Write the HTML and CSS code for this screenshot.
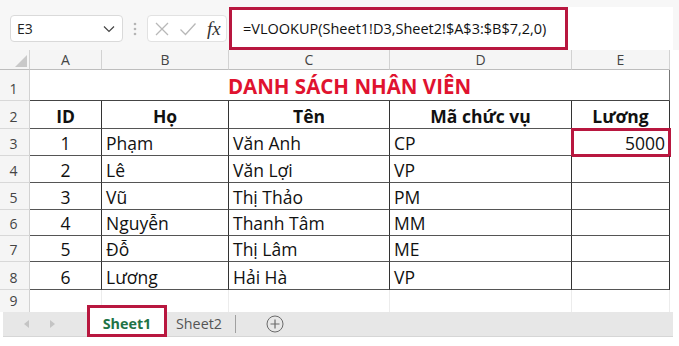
FILE: index.html
```html
<!DOCTYPE html>
<html lang="vi">
<head>
    <meta charset="UTF-8">
    <meta name="viewport" content="width=device-width, initial-scale=1.0">
    <title>Danh sách nhân viên</title>
    <link rel="stylesheet" href="styles.css">
</head>
<body>
    <div class="formula-bar">
        <div class="name-box">
            <span>E3</span>
            <svg class="chevron" width="12" height="8" viewBox="0 0 12 8"><path d="M1 1.5 L6 6.5 L11 1.5" fill="none" stroke="#444" stroke-width="1.2"/></svg>
        </div>
        <svg class="grip" width="4" height="16" viewBox="0 0 4 16"><circle cx="2" cy="3" r="1.3" fill="#b5b5b5"/><circle cx="2" cy="8" r="1.3" fill="#b5b5b5"/><circle cx="2" cy="13" r="1.3" fill="#b5b5b5"/></svg>
        <div class="fx-box">
            <svg width="16" height="16" viewBox="0 0 16 16"><path d="M2 2 L14 14 M14 2 L2 14" stroke="#b8b8b8" stroke-width="1.3"/></svg>
            <svg width="18" height="16" viewBox="0 0 18 16"><path d="M1.5 8.5 L6.5 13.5 L16.5 2.5" fill="none" stroke="#b8b8b8" stroke-width="1.3"/></svg>
            <span class="fx">fx</span>
        </div>
        <div class="formula-input">
            <div class="formula-hl">=VLOOKUP(Sheet1!D3,Sheet2!$A$3:$B$7,2,0)</div>
        </div>
    </div>

    <div class="sheet">
        <div class="cell corner"><svg width="12" height="12" viewBox="0 0 12 12"><path d="M12 0 L12 12 L0 12 Z" fill="#c9c9c9"/></svg></div>
        <div class="cell col-head">A</div>
        <div class="cell col-head">B</div>
        <div class="cell col-head">C</div>
        <div class="cell col-head">D</div>
        <div class="cell col-head">E</div>
        <div class="cell pad"></div>

        <div class="cell row-head">1</div>
        <div class="cell title">DANH SÁCH NHÂN VIÊN</div>
        <div class="cell pad"></div>

        <div class="cell row-head">2</div>
        <div class="cell box th">ID</div>
        <div class="cell box th">Họ</div>
        <div class="cell box th">Tên</div>
        <div class="cell box th">Mã chức vụ</div>
        <div class="cell box th">Lương</div>
        <div class="cell pad"></div>

        <div class="cell row-head">3</div>
        <div class="cell box num">1</div>
        <div class="cell box">Phạm</div>
        <div class="cell box">Văn Anh</div>
        <div class="cell box">CP</div>
        <div class="cell box money selected">5000</div>
        <div class="cell pad"></div>

        <div class="cell row-head">4</div>
        <div class="cell box num">2</div>
        <div class="cell box">Lê</div>
        <div class="cell box">Văn Lợi</div>
        <div class="cell box">VP</div>
        <div class="cell box"></div>
        <div class="cell pad"></div>

        <div class="cell row-head">5</div>
        <div class="cell box num">3</div>
        <div class="cell box">Vũ</div>
        <div class="cell box">Thị Thảo</div>
        <div class="cell box">PM</div>
        <div class="cell box"></div>
        <div class="cell pad"></div>

        <div class="cell row-head">6</div>
        <div class="cell box num">4</div>
        <div class="cell box">Nguyễn</div>
        <div class="cell box">Thanh Tâm</div>
        <div class="cell box">MM</div>
        <div class="cell box"></div>
        <div class="cell pad"></div>

        <div class="cell row-head">7</div>
        <div class="cell box num">5</div>
        <div class="cell box">Đỗ</div>
        <div class="cell box">Thị Lâm</div>
        <div class="cell box">ME</div>
        <div class="cell box"></div>
        <div class="cell pad"></div>

        <div class="cell row-head">8</div>
        <div class="cell box num">6</div>
        <div class="cell box">Lương</div>
        <div class="cell box">Hải Hà</div>
        <div class="cell box">VP</div>
        <div class="cell box"></div>
        <div class="cell pad"></div>

        <div class="cell row-head last">9</div>
        <div class="cell last"></div>
        <div class="cell last"></div>
        <div class="cell last"></div>
        <div class="cell last"></div>
        <div class="cell last"></div>
        <div class="cell pad"></div>
    </div>

    <div class="tab-bar">
        <div class="tab-nav">
            <svg width="6" height="8" viewBox="0 0 6 8"><path d="M5 0 L5 8 L0 4 Z" fill="#c4c4c4"/></svg>
            <svg width="6" height="8" viewBox="0 0 6 8"><path d="M1 0 L1 8 L6 4 Z" fill="#c4c4c4"/></svg>
        </div>
        <div class="tab active">Sheet1</div>
        <div class="tab">Sheet2</div>
        <div class="tab-sep"></div>
        <svg class="add-sheet" width="18" height="18" viewBox="0 0 18 18"><circle cx="9" cy="9" r="8" fill="none" stroke="#6a6a6a" stroke-width="1"/><path d="M9 4.5 V13.5 M4.5 9 H13.5" stroke="#6a6a6a" stroke-width="1.2"/></svg>
    </div>
</body>
</html>
```

FILE: styles.css
```css
* {
  margin: 0;
  padding: 0;
  box-sizing: border-box;
}

body {
  width: 679px;
  height: 346px;
  overflow: hidden;
  background: #ffffff;
  font-family: 'Open Sans', 'Noto Sans', sans-serif;
  color: #111;
}

/* formula bar */
.formula-bar {
  height: 50px;
  padding-top: 7px;
  display: flex;
  align-items: center;
  background: #f7f7f7;
}

.name-box {
  margin-left: 10px;
  width: 113px;
  height: 27px;
  display: flex;
  align-items: center;
  justify-content: space-between;
  padding: 0 7px 0 6px;
  background: #fff;
  border: 1px solid #dadada;
  border-radius: 4px;
  font-size: 14px;
  color: #222;
}

.grip {
  margin-left: 10px;
}

.fx-box {
  margin-left: 10px;
  width: 80px;
  height: 27px;
  display: flex;
  align-items: center;
  gap: 9px;
  padding-left: 6px;
  background: #fff;
  border: 1px solid #e2e2e2;
  border-radius: 4px;
}

.fx {
  font-family: 'Liberation Serif', serif;
  font-style: italic;
  font-size: 19px;
  color: #333;
  margin-left: 1px;
}

.formula-input {
  margin-left: 2px;
  width: 444px;
  height: 43px;
  background: #fff;
  border-radius: 4px 0 0 4px;
}

.formula-hl {
  width: 339px;
  height: 43px;
  border: 3px solid #b8173f;
  padding: 0 0 0 11px;
  display: flex;
  align-items: center;
  font-size: 14.5px;
  color: #111;
  white-space: nowrap;
}

/* grid */
.sheet {
  display: grid;
  grid-template-columns: 30px 72px 127px 161px 182px 98px 9px;
  grid-template-rows: 20px 31px 28px 27px 27px 27px 26px 26px 28px 22px;
}

.cell {
  display: flex;
  align-items: flex-end;
  padding: 0 4px 3px;
  border-right: 1px solid #e2e2e2;
  border-bottom: 1px solid #e2e2e2;
  font-size: 17.5px;
  line-height: 1;
  white-space: nowrap;
}

.pad {
  border: none;
}

.corner {
  background: #f5f5f5;
  border-right-color: #d2d2d2;
  border-bottom-color: #bdbdbd;
  justify-content: flex-end;
  padding: 0 2px 2px 0;
}

.col-head {
  background: #f5f5f5;
  border-right-color: #d2d2d2;
  border-bottom-color: #bdbdbd;
  justify-content: center;
  align-items: center;
  padding: 0;
  font-size: 14px;
  color: #444;
}

.row-head {
  background: #f5f5f5;
  border-right-color: #d2d2d2;
  border-bottom-color: #d8d8d8;
  justify-content: center;
  padding: 0 2px 4px 0;
  font-size: 14px;
  color: #444;
}

.title {
  grid-column: 2 / 7;
  justify-content: center;
  padding-bottom: 4px;
  border-right: 1px solid #777;
  border-bottom: 1px solid #444;
  font-size: 20.5px;
  font-weight: 700;
  color: #e0132f;
}

.box {
  border-right: 1px solid #333;
  border-bottom: 1px solid #555;
}

.th {
  justify-content: center;
  font-weight: 700;
}

.num {
  justify-content: center;
}

.money {
  justify-content: flex-end;
}

.selected {
  outline: 3px solid #b8173f;
  outline-offset: -2px;
}

.last {
  border-bottom: none;
  border-right-color: #ececec;
}

.row-head.last {
  border-bottom: none;
  border-right-color: #d2d2d2;
}

/* sheet tabs */
.tab-bar {
  height: 25px;
  width: 670px;
  margin-left: 3px;
  display: flex;
  align-items: center;
  background: #e7e7e7;
  border-bottom: 1px solid #d6d6d6;
}

.tab-nav {
  width: 84px;
  display: flex;
  gap: 19px;
  padding-left: 21px;
}

.tab {
  padding: 0 0 2px 5px;
  font-size: 14.3px;
  color: #555;
}

.tab.active {
  position: relative;
  align-self: flex-start;
  margin-top: -7px;
  width: 80px;
  height: 32px;
  padding: 6px 0 0 0;
  text-align: center;
  background: #fff;
  border: 3px solid #b8173f;
  font-weight: 700;
  color: #217346;
  margin-right: 4px;
}

.tab-sep {
  width: 1px;
  height: 18px;
  margin-left: 13px;
  background: #a0a0a0;
}

.add-sheet {
  margin-left: 30px;
}
```
